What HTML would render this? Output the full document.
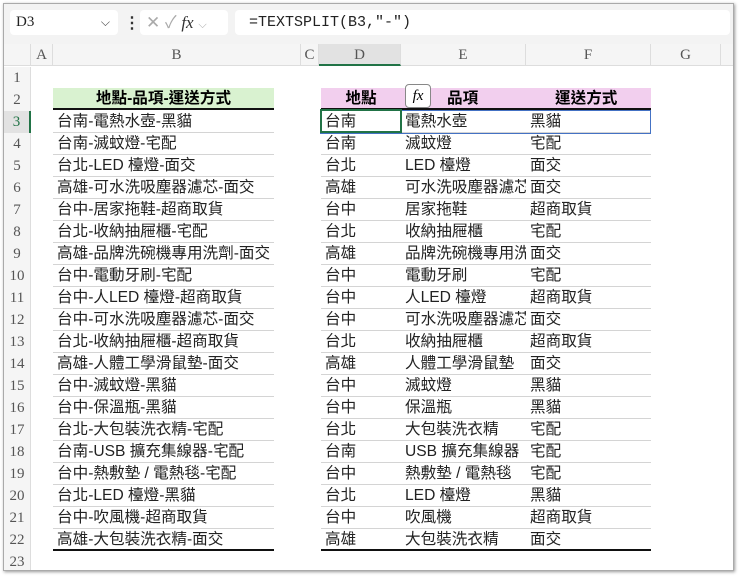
<!DOCTYPE html>
<html><head><meta charset="utf-8"><style>
*{margin:0;padding:0;box-sizing:border-box}
body{width:740px;height:576px;background:#fff;position:relative;overflow:hidden;font-family:"Liberation Sans","Noto Sans CJK TC",sans-serif}
.win{position:absolute;left:3px;top:3px;width:731px;height:568px;border:1px solid #aaa;box-shadow:1px 1px 3px #999;background:#fff;overflow:hidden}
.bar{position:absolute;left:0;top:0;width:100%;height:40px;background:#f3f3f3}
.box{position:absolute;top:6px;height:25px;background:#fff;border-radius:4px;font-size:15px;line-height:25px;color:#222}
.colh{position:absolute;top:40px;height:22px;left:0;width:100%;background:#f5f5f5;border-bottom:1px solid #ddd}
.ch{position:absolute;top:0;height:22px;line-height:22px;text-align:center;font-family:"Liberation Serif",serif;font-size:15px;color:#555;border-right:1px solid #ddd}
.rh{position:absolute;left:0;width:27px;height:22px;background:#f5f5f5;border-right:1px solid #ddd;font-family:"Liberation Serif",serif;font-size:15px;color:#555;text-align:center;line-height:22px}
.c{position:absolute;height:22px;line-height:22px;font-size:15.6px;color:#222;white-space:nowrap;overflow:hidden;border-bottom:1px solid #d4d4d4}
</style></head><body>
<div class="win">
<div class="bar">
<div class="box" style="left:6px;width:108px;padding-left:6px;font-family:'Liberation Serif',serif">D3<span style="position:absolute;right:8px;font-size:12px;color:#444">⌵</span></div>
<div style="position:absolute;left:120px;top:9px;font-size:16px;color:#333;font-weight:bold">⋮</div>
<div class="box" style="left:136px;width:88px;color:#aaa;font-size:17px;padding-left:6px">✕ ✓ <i style="font-family:'Liberation Serif',serif;color:#333">fx</i> <span style="font-size:11px">⌵</span></div>
<div class="box" style="left:231px;width:495px;padding-left:14px;font-family:'Liberation Mono',monospace;font-size:15px">=TEXTSPLIT(B3,"-")</div>
</div>
<div class="colh">
<div class="ch" style="left:0;width:27px"></div>
<div class="ch" style="left:27px;width:22px">A</div>
<div class="ch" style="left:49px;width:248px">B</div>
<div class="ch" style="left:297px;width:18px">C</div>
<div class="ch" style="left:315px;width:82px;background:#e2e2e2;border-bottom:2px solid #217346">D</div>
<div class="ch" style="left:397px;width:125px">E</div>
<div class="ch" style="left:522px;width:125px">F</div>
<div class="ch" style="left:647px;width:70px">G</div>
</div>
<div id="rows"></div>
<div style="position:absolute;left:49px;top:84px;width:221px;height:22px;background:#d9f2d0;text-align:center;font-weight:bold;font-size:15.6px;line-height:22px;border-bottom:2px solid #111">地點-品項-運送方式</div>
<div style="position:absolute;left:317px;top:84px;width:330px;height:22px;background:#f2cfee;font-weight:bold;font-size:15.6px;line-height:22px;border-bottom:2px solid #111">
<span style="position:absolute;left:0;width:80px;text-align:center">地點</span>
<span style="position:absolute;left:126px">品項</span>
<span style="position:absolute;left:234px">運送方式</span></div>
<div style="position:absolute;left:401px;top:80px;width:26px;height:24px;border:1px solid #888;border-radius:4px;background:#fff;font-family:'Liberation Serif',serif;font-style:italic;font-size:15px;text-align:center;line-height:22px">fx</div>
<div style="position:absolute;left:316px;top:106px;width:331px;height:24px;border:1px solid #4472c4"></div>
<div style="position:absolute;left:316px;top:105px;width:82px;height:24px;border:2px solid #217346"></div>
</div>
<script>
var d=[["台南","電熱水壺","黑貓"],["台南","滅蚊燈","宅配"],["台北","LED 檯燈","面交"],["高雄","可水洗吸塵器濾芯","面交"],["台中","居家拖鞋","超商取貨"],["台北","收納抽屜櫃","宅配"],["高雄","品牌洗碗機專用洗劑","面交"],["台中","電動牙刷","宅配"],["台中","人LED 檯燈","超商取貨"],["台中","可水洗吸塵器濾芯","面交"],["台北","收納抽屜櫃","超商取貨"],["高雄","人體工學滑鼠墊","面交"],["台中","滅蚊燈","黑貓"],["台中","保溫瓶","黑貓"],["台北","大包裝洗衣精","宅配"],["台南","USB 擴充集線器","宅配"],["台中","熱敷墊 / 電熱毯","宅配"],["台北","LED 檯燈","黑貓"],["台中","吹風機","超商取貨"],["高雄","大包裝洗衣精","面交"]];
var h="";
for(var r=1;r<=23;r++){var t=63+(r-1)*22;h+='<div class="rh" style="top:'+t+'px;'+(r==3?'background:#e2e2e2;color:#217346;border-right:2px solid #217346':'')+'">'+r+'</div>';}
d.forEach(function(x,i){var t=107+i*22;var last=i==19?'border-bottom:2px solid #111;':'';
h+='<div class="c" style="left:49px;top:'+t+'px;width:221px;padding-left:4px;'+last+'">'+x.join("-")+'</div>';
h+='<div class="c" style="left:317px;top:'+t+'px;width:80px;padding-left:4px;'+last+'">'+x[0]+'</div>';
h+='<div class="c" style="left:397px;top:'+t+'px;width:125px;padding-left:4px;'+last+'">'+x[1]+'</div>';
h+='<div class="c" style="left:522px;top:'+t+'px;width:125px;padding-left:4px;'+last+'">'+x[2]+'</div>';});
document.getElementById("rows").innerHTML=h;
</script>
</body></html>
